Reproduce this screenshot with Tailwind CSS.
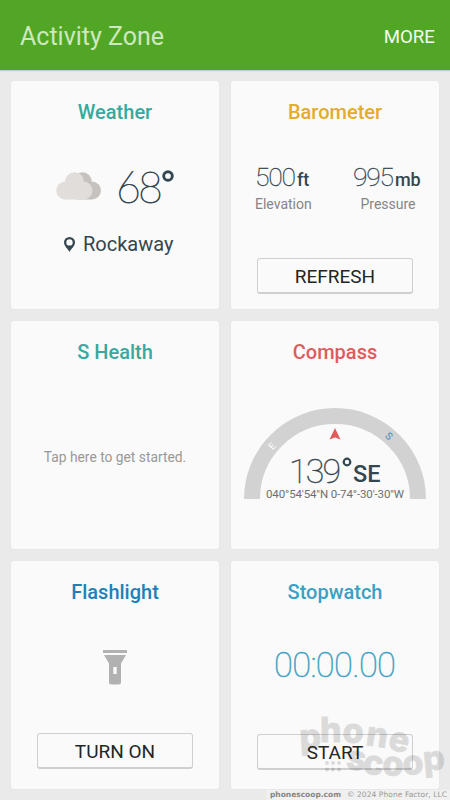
<!DOCTYPE html>
<html lang="en">
<head>
<meta charset="utf-8">
<title>Activity Zone</title>
<script src="https://cdn.jsdelivr.net/npm/@tailwindcss/browser@4"></script>
</head>
<body class="relative w-[450px] h-[800px] overflow-hidden bg-[#eaeaea] font-['Roboto',sans-serif]">
<header class="flex h-[70px] items-center justify-between bg-[#51a725] pl-5 pr-[15px] pt-[3px] shadow-[0_1px_1px_#c8c8c8]">
  <h1 class="text-[25px] leading-[30px] text-[#cfe8bf]">Activity Zone</h1>
  <button class="text-[18.700px] leading-6 text-[#f4faf0]">MORE</button>
</header>
<main class="grid grid-cols-[208px_208px] grid-rows-[228px_228px_228px] gap-3 pl-[11px] pt-[11px] text-center">
  <section class="flex flex-col items-center rounded-[2px] bg-[#fafafa] pt-[19px] shadow-[0_0_1px_#d0d0d0]">
    <h2 class="text-[20px] leading-6 font-medium text-[#38a99d]">Weather</h2>
    <div class="mt-[39px] flex h-[48px] w-full items-start pl-[45px]">
      <svg class="mt-[9px]" width="46" height="28" viewBox="0 0 46 28">
        <g fill="#c6c2bf"><circle cx="26.500" cy="9.500" r="9.200"/><circle cx="36" cy="18.500" r="9"/><path d="M20 12H36V27.500H20Z"/></g>
        <g fill="#e1dddb"><circle cx="18.500" cy="9.700" r="9.500"/><circle cx="9.200" cy="18.500" r="9"/><circle cx="27.500" cy="18.500" r="9"/><path d="M9.200 12H27.500V27.500H9.200Z"/></g>
      </svg>
      <span class="ml-[14px] font-['Lato',sans-serif] text-[43px] leading-[48px] font-thin tracking-[-3px] text-[#34464f] [-webkit-text-stroke:0.8px_#34464f]">68</span>
      <svg class="mt-[7px] ml-[2px]" width="12" height="12" viewBox="0 0 12 12"><circle cx="6" cy="6" r="4.300" fill="none" stroke="#34464f" stroke-width="2.900"/></svg>
    </div>
    <div class="mt-[21px] flex h-6 w-full items-center pl-[53px]">
      <svg width="11" height="15" viewBox="0 0 11 15"><path fill="#34464f" fill-rule="evenodd" d="M5.500 0A5.500 5.500 0 0 0 0 5.500C0 9 4 12 5.500 15C7 12 11 9 11 5.500A5.500 5.500 0 0 0 5.500 0ZM5.500 2.200A3.200 3.200 0 1 1 5.500 8.600A3.200 3.200 0 1 1 5.500 2.200Z"/></svg>
      <span class="ml-[8px] text-[20px] leading-6 text-[#34464f]">Rockaway</span>
    </div>
  </section>

  <section class="flex flex-col items-center rounded-[2px] bg-[#fafafa] pt-[19px] shadow-[0_0_1px_#d0d0d0]">
    <h2 class="text-[20px] leading-6 font-medium text-[#e3ac2b]">Barometer</h2>
    <div class="mt-[37px] flex w-full justify-between pl-[24px] pr-[16px] text-[#34464f]">
      <div class="w-[56px]">
        <div class="flex h-8 items-baseline whitespace-nowrap leading-[32px]"><span class="text-[26.500px] font-thin tracking-[-1.200px] [-webkit-text-stroke:0.3px_#34464f]">500</span><span class="ml-[2px] text-[18px] font-medium">ft</span></div>
        <div class="text-[14px] leading-[22px] text-[#858585]">Elevation</div>
      </div>
      <div class="w-[70px]">
        <div class="flex h-8 items-baseline whitespace-nowrap leading-[32px]"><span class="text-[26.500px] font-thin tracking-[-1.200px] [-webkit-text-stroke:0.3px_#34464f]">995</span><span class="ml-[2px] text-[18px] font-medium">mb</span></div>
        <div class="text-[14px] leading-[22px] text-[#858585]">Pressure</div>
      </div>
    </div>
    <button class="mt-[43px] h-[36px] w-[156px] rounded-[3px] border border-[#cfcfcf] border-b-2 text-[19px] leading-[35px] text-[#252525]">REFRESH</button>
  </section>

  <section class="flex flex-col items-center rounded-[2px] bg-[#fafafa] pt-[19px] shadow-[0_0_1px_#d0d0d0]">
    <h2 class="text-[20px] leading-6 font-medium text-[#38a99d]">S Health</h2>
    <p class="mt-[83px] text-[13.800px] leading-[20px] text-[#989898]">Tap here to get started.</p>
  </section>

  <section class="flex flex-col items-center rounded-[2px] bg-[#fafafa] pt-[19px] shadow-[0_0_1px_#d0d0d0]">
    <h2 class="text-[20px] leading-6 font-medium text-[#e05c5c]">Compass</h2>
    <svg class="mt-[43px]" width="184" height="94" viewBox="243 407 184 94">
      <path fill="none" stroke="#d2d2d2" stroke-width="16" d="M252 499A83 83 0 0 1 418 499"/>
      <path fill="#e05c5c" d="M335 428L340.500 439.500L335 437.500L329.500 439.500Z"/>
      <g font-family="Roboto, sans-serif">
        <text x="0" y="3.500" font-size="9.500" text-anchor="middle" fill="#fff" transform="translate(272 446) rotate(-49)">E</text>
        <text x="0" y="3.500" font-size="10" text-anchor="middle" fill="#4288b8" transform="translate(389 436) rotate(41)">S</text>
        <text x="289" y="482.500" font-weight="100" font-size="34" fill="#34464f" stroke="#34464f" stroke-width=".4" textLength="52" lengthAdjust="spacing">139</text>
        <circle cx="347" cy="462" r="3.300" fill="none" stroke="#34464f" stroke-width="2.200"/>
        <text x="353" y="482" font-weight="500" font-size="23" fill="#34464f" textLength="27.500" lengthAdjust="spacingAndGlyphs">SE</text>
        <text x="266" y="498" font-size="11.500" fill="#6f6f6f" textLength="138">040°54'54"N 0-74°-30'-30"W</text>
      </g>
    </svg>
  </section>

  <section class="flex flex-col items-center rounded-[2px] bg-[#fafafa] pt-[19px] shadow-[0_0_1px_#d0d0d0]">
    <h2 class="text-[20px] leading-6 font-medium text-[#2180b8]">Flashlight</h2>
    <svg class="mt-[46px]" width="24" height="35" viewBox="0 0 24 35">
      <path fill="#b1b1b1" fill-rule="evenodd" d="M0 0H24V3H0ZM1 5H23L18 13.500V32Q18 34.500 15.500 34.500H8.500Q6 34.500 6 32V13.500ZM10.300 17V24H13.700V17Z"/>
    </svg>
    <button class="mt-[48px] h-[36px] w-[156px] rounded-[3px] border border-[#cfcfcf] border-b-2 text-[19px] leading-[35px] text-[#252525]">TURN ON</button>
  </section>

  <section class="flex flex-col items-center rounded-[2px] bg-[#fafafa] pt-[19px] shadow-[0_0_1px_#d0d0d0]">
    <h2 class="text-[20px] leading-6 font-medium text-[#3c9fc4]">Stopwatch</h2>
    <svg class="mt-[39px]" width="124" height="44" viewBox="0 0 124 44"><text x="1" y="34" font-family="Roboto, sans-serif" font-weight="100" font-size="34.500" fill="#3c9fc4" stroke="#3c9fc4" stroke-width=".5" textLength="122" lengthAdjust="spacing">00:00.00</text></svg>
    <button class="mt-[47px] h-[36px] w-[156px] rounded-[3px] border border-[#cfcfcf] border-b-2 text-[19px] leading-[35px] text-[#252525]">START</button>
  </section>
</main>
<svg class="pointer-events-none absolute left-[266px] top-[710px]" width="184" height="90" viewBox="266 710 184 90">
  <path fill="#fff" fill-opacity=".3" d="M266 790H450V800H266Z"/>
  <g opacity=".12" stroke="#000" stroke-width=".8" font-family="Inter, sans-serif" font-weight="800" font-size="34">
    <text x="300 320 342 365 387" y="749 742 742 745 749" rotate="-3 0 4 8 12">phone</text>
    <text x="345 362 382 403 424" y="768 773 775 775 771" rotate="10 8 3 -3 -5">scoop</text>
    <g stroke="none"><circle cx="327" cy="763" r="2"/><circle cx="333" cy="763" r="2"/><circle cx="339" cy="763" r="2"/><circle cx="327" cy="769.500" r="2"/><circle cx="333" cy="769.500" r="2"/><circle cx="339" cy="769.500" r="2"/></g>
  </g>
  <g font-family="'DejaVu Sans', sans-serif" font-size="7.500">
    <text x="270" y="797" font-weight="700" fill="#858585" textLength="71">phonescoop.com</text>
    <text x="347" y="797" fill="#999" textLength="100">© 2024 Phone Factor, LLC</text>
  </g>
</svg>
</body>
</html>
